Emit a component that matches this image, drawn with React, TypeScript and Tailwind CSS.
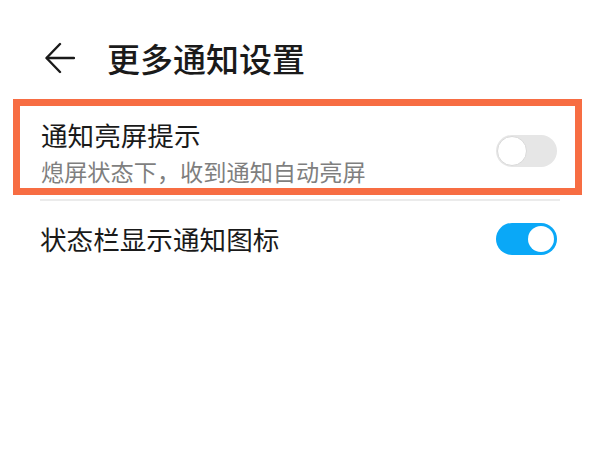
import React from "react";

function Toggle({ on }: { on: boolean }) {
  return on ? (
    <div className="flex h-[32px] w-[61px] items-center justify-end rounded-full bg-[#0aa8f7] px-[3px]">
      <div className="h-[26px] w-[26px] rounded-full bg-white" />
    </div>
  ) : (
    <div className="flex h-[32px] w-[61px] items-center justify-start rounded-full bg-[#e6e6e6] px-[1px]">
      <div className="h-[30px] w-[30px] rounded-full border border-[#d9d9d9] bg-white" />
    </div>
  );
}

export default function App() {
  return (
    <div
      className="flex h-[450px] w-[600px] flex-col bg-white text-[#1a1a1a]"
      style={{ fontFamily: '"Noto Sans CJK SC", "Noto Sans", sans-serif' }}
    >
      <div className="flex h-[99px] items-center pt-[17px] pl-[45px]">
        <svg width="30" height="32" viewBox="0 0 30 32" fill="none" stroke="#1a1a1a" strokeWidth="2.4" strokeLinecap="round" strokeLinejoin="round">
          <path d="M29 16H2" />
          <path d="M15 2L1.5 16L15 30" />
        </svg>
        <div className="ml-[32px] text-[33px] font-medium leading-none">更多通知设置</div>
      </div>
      <div className="ml-[13px] flex h-[96px] w-[569px] items-start justify-between border-[7px] border-[#f76d43] pl-[21px] pr-[18px]">
        <div className="flex flex-col pt-[12px]">
          <div className="text-[26.6px] leading-[34px]">通知亮屏提示</div>
          <div className="mt-[5px] text-[23.2px] leading-[28px] text-[#7f7f7f]">熄屏状态下，收到通知自动亮屏</div>
        </div>
        <div className="mt-[29px]">
          <Toggle on={false} />
        </div>
      </div>
      <div className="mx-[40px] mt-[4px] h-[2px] bg-[#ebebeb]" />
      <div className="flex h-[78px] items-center justify-between pb-[2px] pl-[40px] pr-[43px]">
        <div className="text-[26.6px] leading-[34px]">状态栏显示通知图标</div>
        <Toggle on={true} />
      </div>
    </div>
  );
}
